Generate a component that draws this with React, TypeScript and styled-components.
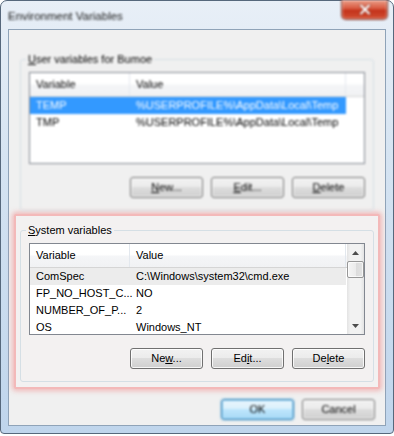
import styled, { createGlobalStyle, css } from "styled-components";

const GlobalStyle = createGlobalStyle`
  html, body {
    margin: 0;
    padding: 0;
    background: #ffffff;
  }
  body {
    font-family: "Liberation Sans", Arial, sans-serif;
    font-size: 11px;
    color: #000;
  }
`;

// the screenshot is out of focus everywhere except the highlighted group
const softFocus = css`
  filter: blur(0.8px);
`;

const Window = styled.div`
  box-sizing: border-box;
  width: 394px;
  height: 434px;
  display: flex;
  flex-direction: column;
  padding: 0 7px 7px;
  border: 1px solid #56687c;
  border-radius: 7px 7px 4px 4px;
  background: linear-gradient(180deg, #e8eff7 0%, #d6e4f2 35%, #bfd5ec 100%);
`;

const TitleBar = styled.div`
  height: 28px;
  display: flex;
  align-items: flex-start;
  justify-content: space-between;
  ${softFocus}
`;

const Title = styled.span`
  margin-top: 7px;
  line-height: 16px;
  font-size: 11.5px;
  color: #1a1a1a;
`;

const CloseButton = styled.div`
  box-sizing: border-box;
  width: 47px;
  height: 20px;
  margin: -1px -2px 0 0;
  display: flex;
  align-items: center;
  justify-content: center;
  border: 1px solid #7a3427;
  border-top: 0;
  border-radius: 0 0 5px 5px;
  background: linear-gradient(180deg, #eba08a 0%, #d8583f 45%, #c3321a 55%, #d24f33 100%);
  box-shadow: inset 0 0 0 1px rgba(255, 210, 200, 0.5);
`;

const Client = styled.div`
  flex: 1;
  display: flex;
  flex-direction: column;
  background: #f0f0f0;
  border: 1px solid #8fa3b8;
`;

const UserArea = styled.div`
  margin: 22px 11px 0;
  ${softFocus}
`;

const Highlight = styled.div`
  margin: 3px 5px 0;
  padding: 7px 4px 5px;
  border: 2px solid #f3b9b9;
  border-radius: 2px;
  background: #f3f1f1;
  box-shadow: 0 0 5px 2px rgba(240, 140, 140, 0.55);
`;

const Group = styled.fieldset`
  margin: 0;
  min-width: 0;
  padding: 5px 8px 12px;
  border: 1px solid #d5dfe5;
  border-radius: 3px;
`;

const Legend = styled.legend`
  margin-left: -3px;
  padding: 0 2px;
  line-height: 15px;
`;

const ListBox = styled.div`
  box-sizing: border-box;
  height: 92px;
  display: flex;
  border: 1px solid #828790;
  background: #ffffff;
  overflow: hidden;
`;

const ListBody = styled.div`
  flex: 1;
  min-width: 0;
  display: flex;
  flex-direction: column;
`;

const HeaderRow = styled.div`
  flex-shrink: 0;
  display: grid;
  grid-template-columns: 100px 216px 1fr;
  height: 23px;
  border-bottom: 1px solid #d5d5d5;
  background: linear-gradient(180deg, #ffffff 0%, #ffffff 45%, #f4f5f7 55%, #f1f2f4 100%);
`;

const HeaderCell = styled.div`
  padding-left: 6px;
  line-height: 23px;
  border-right: 1px solid #e3e8ee;
  white-space: nowrap;
`;

const HeaderFiller = styled.div``;

type RowState = "selected" | "inactive" | undefined;

const Row = styled.div<{ $state?: RowState }>`
  flex-shrink: 0;
  display: grid;
  grid-template-columns: 100px 216px;
  width: 316px;
  height: 17px;
  line-height: 17px;
  color: ${({ $state }) => ($state === "selected" ? "#ffffff" : "#000000")};
  background: ${({ $state }) =>
    $state === "selected" ? "#3399ff" : $state === "inactive" ? "#ececec" : "transparent"};
`;

const Cell = styled.div`
  padding-left: 6px;
  white-space: nowrap;
`;

const ScrollBar = styled.div`
  width: 17px;
  flex-shrink: 0;
  display: flex;
  flex-direction: column;
  background: linear-gradient(90deg, #e3e3e3 0%, #f2f2f2 20%, #f2f2f2 80%, #e3e3e3 100%);
`;

const ArrowButton = styled.div`
  height: 17px;
  flex-shrink: 0;
  display: flex;
  align-items: center;
  justify-content: center;
`;

const Thumb = styled.div`
  box-sizing: border-box;
  height: 17px;
  flex-shrink: 0;
  border: 1px solid #979797;
  border-radius: 2px;
  background: linear-gradient(90deg, #f5f5f5 0%, #ececec 50%, #dcdcdc 51%, #e2e2e2 100%);
  box-shadow: inset 0 0 0 1px rgba(255, 255, 255, 0.7);
`;

const Track = styled.div`
  flex: 1;
`;

const ButtonRow = styled.div`
  display: flex;
  justify-content: flex-end;
  gap: 8px;
  margin-top: 13px;
`;

const Button = styled.button<{ $default?: boolean }>`
  box-sizing: border-box;
  width: 73px;
  height: 21px;
  padding: 0;
  font: inherit;
  line-height: 19px;
  color: #000;
  border-radius: 3px;
  border: 1px solid ${({ $default }) => ($default ? "#3c7fb1" : "#707070")};
  background: ${({ $default }) =>
    $default
      ? "linear-gradient(180deg, #eaf6fd 0%, #d9f0fc 49%, #bee6fd 50%, #a7d9f5 100%)"
      : "linear-gradient(180deg, #f2f2f2 0%, #ebebeb 49%, #dddddd 50%, #cfcfcf 100%)"};
  box-shadow: ${({ $default }) =>
    $default
      ? "inset 0 0 0 1px #8fd0f2, 0 0 2px #6cc4f0"
      : "inset 0 0 0 1px rgba(255, 255, 255, 0.8)"};
`;

const Footer = styled.div`
  flex: 1;
  display: flex;
  justify-content: flex-end;
  align-items: flex-start;
  gap: 8px;
  padding: 10px 10px 0 0;
  ${softFocus}
`;

interface Variable {
  name: string;
  value: string;
}

const userVariables: Variable[] = [
  { name: "TEMP", value: "%USERPROFILE%\\AppData\\Local\\Temp" },
  { name: "TMP", value: "%USERPROFILE%\\AppData\\Local\\Temp" },
];

const systemVariables: Variable[] = [
  { name: "ComSpec", value: "C:\\Windows\\system32\\cmd.exe" },
  { name: "FP_NO_HOST_C...", value: "NO" },
  { name: "NUMBER_OF_P...", value: "2" },
  { name: "OS", value: "Windows_NT" },
];

const Arrow = ({ down }: { down?: boolean }) => (
  <svg width="7" height="4" viewBox="0 0 7 4">
    <path d={down ? "M0 0 H7 L3.5 4 Z" : "M0 4 H7 L3.5 0 Z"} fill="#4d4d4d" />
  </svg>
);

const VariableList = ({
  rows,
  selected,
  inactive,
  scroll,
}: {
  rows: Variable[];
  selected?: number;
  inactive?: number;
  scroll?: boolean;
}) => (
  <ListBox>
    <ListBody>
      <HeaderRow>
        <HeaderCell>Variable</HeaderCell>
        <HeaderCell>Value</HeaderCell>
        <HeaderFiller />
      </HeaderRow>
      {rows.map((row, i) => (
        <Row
          key={row.name}
          $state={i === selected ? "selected" : i === inactive ? "inactive" : undefined}
        >
          <Cell>{row.name}</Cell>
          <Cell>{row.value}</Cell>
        </Row>
      ))}
    </ListBody>
    {scroll && (
      <ScrollBar>
        <ArrowButton>
          <Arrow />
        </ArrowButton>
        <Thumb />
        <Track />
        <ArrowButton>
          <Arrow down />
        </ArrowButton>
      </ScrollBar>
    )}
  </ListBox>
);

const App = () => (
  <>
    <GlobalStyle />
    <Window>
      <TitleBar>
        <Title>Environment Variables</Title>
        <CloseButton>
          <svg width="12" height="11" viewBox="0 0 12 11">
            <path d="M2 1.5 L10 9.5 M10 1.5 L2 9.5" stroke="#6e2418" strokeWidth="3.6" strokeLinecap="round" opacity="0.5" />
            <path d="M2 1.5 L10 9.5 M10 1.5 L2 9.5" stroke="#ffffff" strokeWidth="2" strokeLinecap="round" />
          </svg>
        </CloseButton>
      </TitleBar>
      <Client>
        <UserArea>
          <Group>
            <Legend>
              <u>U</u>ser variables for Bumoe
            </Legend>
            <VariableList rows={userVariables} selected={0} />
            <ButtonRow>
              <Button>
                <u>N</u>ew...
              </Button>
              <Button>
                <u>E</u>dit...
              </Button>
              <Button>
                <u>D</u>elete
              </Button>
            </ButtonRow>
          </Group>
        </UserArea>
        <Highlight>
          <Group>
            <Legend>
              <u>S</u>ystem variables
            </Legend>
            <VariableList rows={systemVariables} inactive={0} scroll />
            <ButtonRow>
              <Button>
                Ne<u>w</u>...
              </Button>
              <Button>
                Ed<u>i</u>t...
              </Button>
              <Button>
                De<u>l</u>ete
              </Button>
            </ButtonRow>
          </Group>
        </Highlight>
        <Footer>
          <Button $default>OK</Button>
          <Button>Cancel</Button>
        </Footer>
      </Client>
    </Window>
  </>
);

export default App;
